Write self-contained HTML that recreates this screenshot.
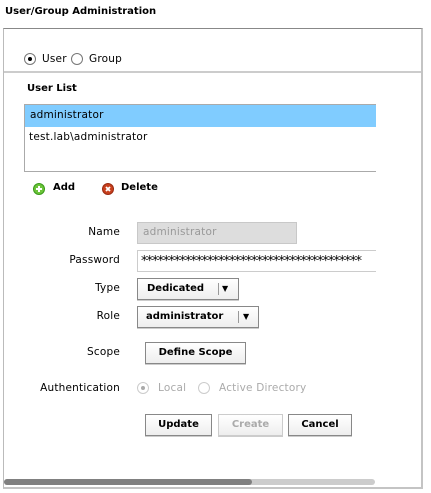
<!DOCTYPE html>
<html><head><style>
*{margin:0;padding:0;box-sizing:border-box}
body{width:431px;height:493px;background:#fff;position:relative;overflow:hidden;font-family:"DejaVu Sans","Liberation Sans",sans-serif;font-size:10.5px;letter-spacing:0.2px;color:#000}
.a{position:absolute;white-space:nowrap}
.b{font-weight:bold;font-size:10px;letter-spacing:0}
.lbl{position:absolute;right:311px;white-space:nowrap}
.btn{position:absolute;border:1px solid #888;background:linear-gradient(#fff,#eee);font-weight:bold;font-size:10px;letter-spacing:0;text-align:center;line-height:20px;height:22px;box-shadow:0 1px 0 #ccc}
.radio{position:absolute;width:12px;height:12px;border:1px solid #777;border-radius:50%;background:#fff}
.radio.on::after{content:"";position:absolute;left:3px;top:3px;width:4px;height:4px;border-radius:50%;background:#000}
.dis{border-color:#ccc}.dis.on::after{background:#aaa}
</style></head><body>
<div class="a b" style="left:5px;top:6px;font-size:10px">User/Group Administration</div>
<div class="a" style="left:3px;top:28px;width:420px;height:461px;border-top:1px solid #888;border-left:1px solid #bbb;border-right:2px solid #c4c4c4;border-bottom:2px solid #c4c4c4"></div>
<div class="a" style="left:4px;top:71px;width:417px;height:2px;background:#ccc"></div>
<div class="radio on" style="left:24px;top:53px"></div>
<div class="a" style="left:42px;top:53px">User</div>
<div class="radio" style="left:71px;top:53px"></div>
<div class="a" style="left:89px;top:53px">Group</div>
<div class="a b" style="left:27px;top:83px">User List</div>
<div class="a" style="left:24px;top:104px;width:352px;height:68px;border:1px solid #aaa;border-right:none"></div>
<div class="a" style="left:25px;top:105px;width:351px;height:22px;background:#80ccff"></div>
<div class="a" style="left:30px;top:109px">administrator</div>
<div class="a" style="left:29px;top:131px">test.lab\administrator</div>
<svg class="a" style="left:33px;top:183px" width="12" height="12"><circle cx="6" cy="6" r="6" fill="#3a9a1a"/><circle cx="6" cy="6" r="5" fill="#6cc43a"/><path d="M6 3v6M3 6h6" stroke="#fff" stroke-width="2"/></svg>
<div class="a b" style="left:53px;top:182px">Add</div>
<svg class="a" style="left:102px;top:183px" width="12" height="12"><circle cx="6" cy="6" r="6" fill="#9a2a10"/><circle cx="6" cy="6" r="5" fill="#c8401e"/><path d="M4 4l4 4M8 4l-4 4" stroke="#fff" stroke-width="1.8"/></svg>
<div class="a b" style="left:121px;top:182px">Delete</div>
<div class="lbl" style="top:226px">Name</div>
<div class="a" style="left:137px;top:222px;width:160px;height:22px;background:#ddd;border:1px solid #c8c8c8;color:#999;padding:3px 5px">administrator</div>
<div class="lbl" style="top:254px">Password</div>
<div class="a" style="left:137px;top:250px;width:239px;height:22px;border:1px solid #ccc;border-right:none;overflow:hidden;padding:3px 3px;letter-spacing:-1px;font-size:13px">****************************************</div>
<div class="lbl" style="top:282px">Type</div>
<div class="btn" style="left:137px;top:278px;width:102px;text-align:left;padding-left:9px">Dedicated<span style="position:absolute;left:80px;top:4px;height:12px;border-left:1px solid #999"></span><span style="position:absolute;left:84px;top:0;font-size:8px">▼</span></div>
<div class="lbl" style="top:310px">Role</div>
<div class="btn" style="left:137px;top:306px;width:122px;text-align:left;padding-left:8px">administrator<span style="position:absolute;left:100px;top:4px;height:12px;border-left:1px solid #999"></span><span style="position:absolute;left:105px;top:0;font-size:8px">▼</span></div>
<div class="lbl" style="top:346px">Scope</div>
<div class="btn" style="left:145px;top:342px;width:101px">Define Scope</div>
<div class="lbl" style="top:382px">Authentication</div>
<div class="radio on dis" style="left:137px;top:382px"></div>
<div class="a" style="left:158px;top:382px;color:#aaa">Local</div>
<div class="radio dis" style="left:198px;top:382px"></div>
<div class="a" style="left:219px;top:382px;color:#aaa">Active Directory</div>
<div class="btn" style="left:145px;top:414px;width:67px">Update</div>
<div class="btn" style="left:218px;top:414px;width:65px;color:#aaa;border-color:#ccc">Create</div>
<div class="btn" style="left:288px;top:414px;width:64px">Cancel</div>
<div class="a" style="left:4px;top:479px;width:371px;height:6px;background:#ccc;border-radius:3px"></div>
<div class="a" style="left:4px;top:479px;width:248px;height:6px;background:#808080;border-radius:3px"></div>
</body></html>
